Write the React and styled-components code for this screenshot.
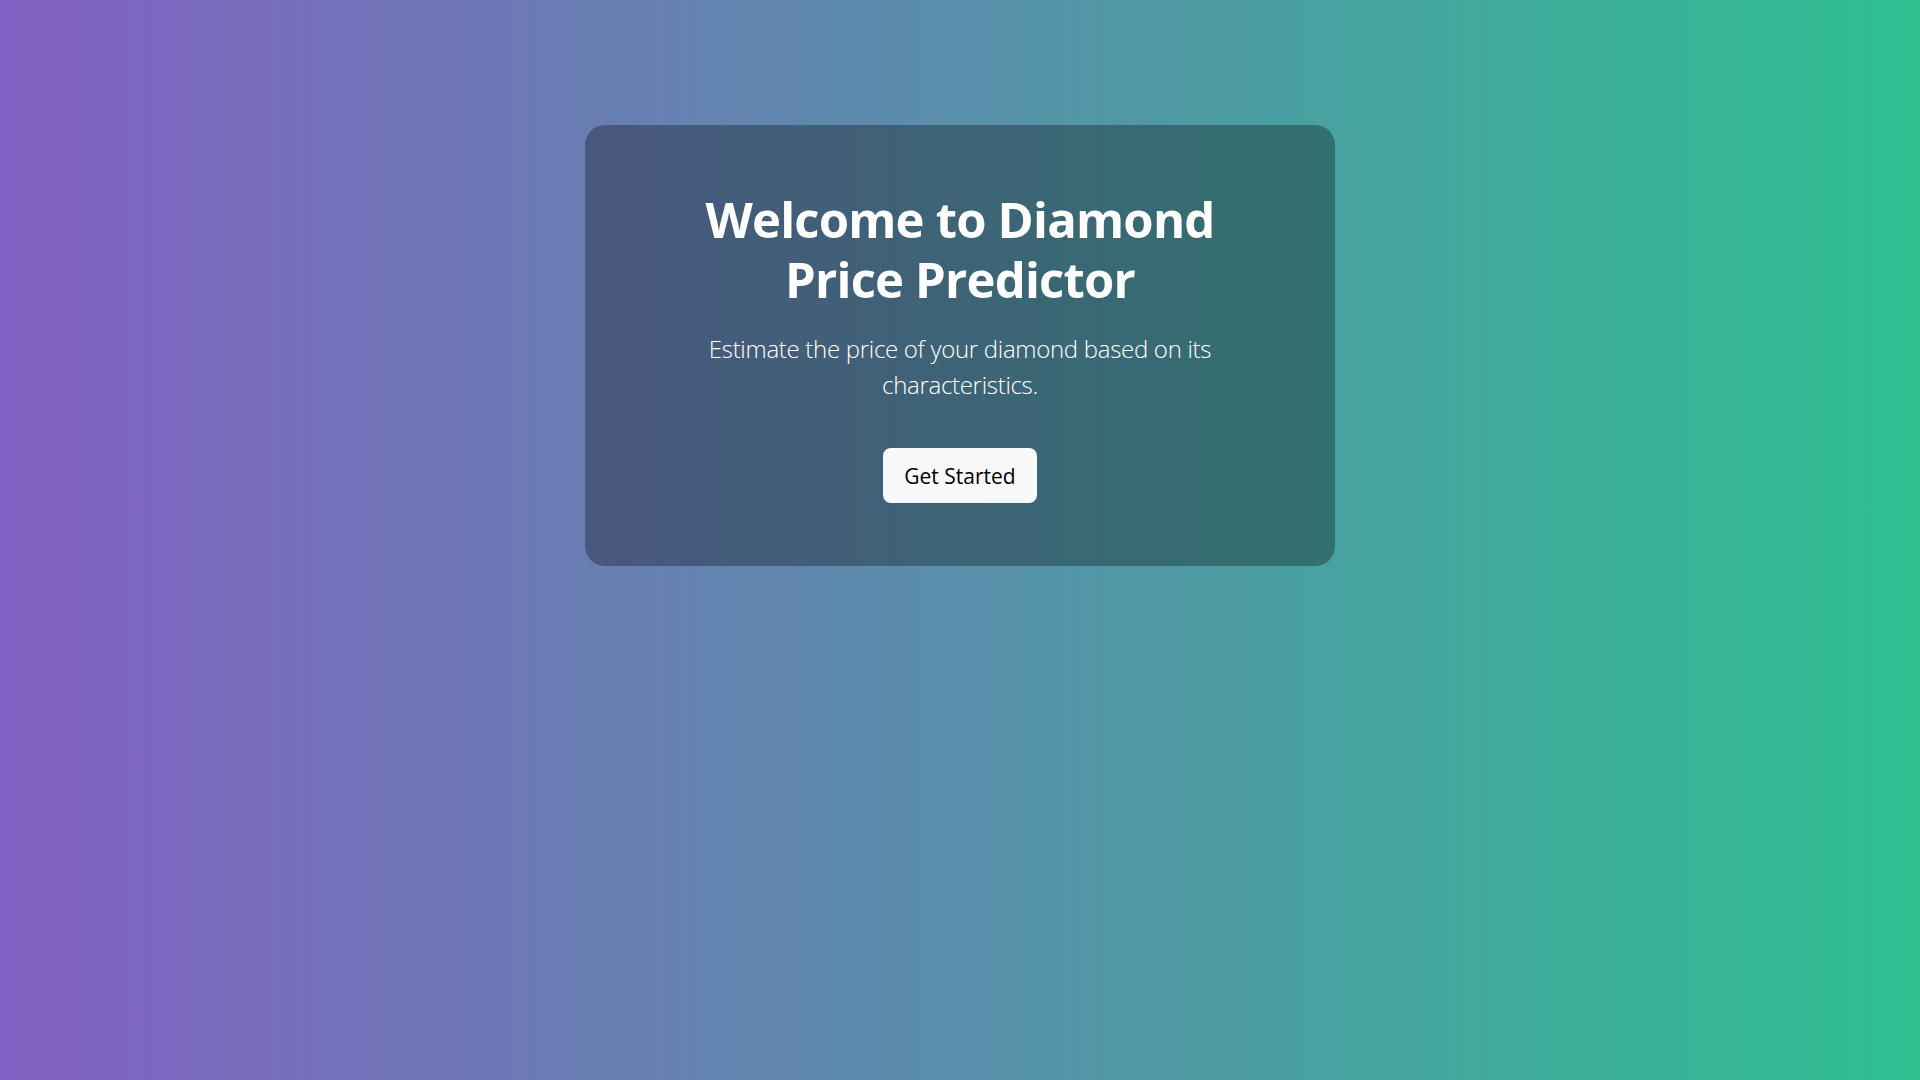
import React from "react";
import styled, { createGlobalStyle } from "styled-components";

const GlobalStyle = createGlobalStyle`
  html, body {
    margin: 0;
    padding: 0;
    min-height: 100%;
  }
  body {
    font-family: "Open Sans", "Noto Sans", sans-serif;
    background: linear-gradient(to right, #8360c3, #2ebf91);
    min-height: 100vh;
  }
`;

const Page = styled.main`
  min-height: 100vh;
  box-sizing: border-box;
  display: flex;
  justify-content: center;
  align-items: flex-start;
  padding-top: 125px;
`;

const Card = styled.section`
  width: 750px;
  box-sizing: border-box;
  padding: 64px 64px 63px;
  border-radius: 20px;
  background: rgba(0, 0, 0, 0.3);
  color: #ffffff;
  display: flex;
  flex-direction: column;
  align-items: center;
  text-align: center;
`;

const Title = styled.h1`
  margin: 0;
  max-width: 600px;
  font-size: 49px;
  line-height: 60px;
  font-weight: 700;
  letter-spacing: -0.8px;
`;

const Subtitle = styled.p`
  margin: 22px 0 0;
  max-width: 560px;
  font-size: 24px;
  line-height: 36px;
  font-weight: 300;
  letter-spacing: -0.3px;
`;

const Button = styled.button`
  margin-top: 45px;
  width: 154px;
  height: 55px;
  border: none;
  border-radius: 8px;
  background: #f8f9fa;
  color: #000000;
  font-family: "Open Sans", "Noto Sans", sans-serif;
  font-size: 21px;
  cursor: pointer;
`;

export default function App() {
  return (
    <>
      <GlobalStyle />
      <Page>
        <Card>
          <Title>Welcome to Diamond Price Predictor</Title>
          <Subtitle>
            Estimate the price of your diamond based on its characteristics.
          </Subtitle>
          <Button>Get Started</Button>
        </Card>
      </Page>
    </>
  );
}
